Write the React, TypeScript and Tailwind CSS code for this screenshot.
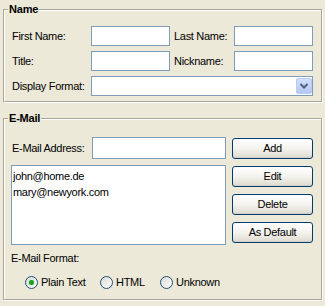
import React from "react";

function Group({ title, className, children }: { title: string; className?: string; children: React.ReactNode }) {
  return (
    <div
      className={`relative border border-[#ACA899] shadow-[inset_1px_1px_0_#ffffff,1px_1px_0_#ffffff] ${className ?? ""}`}
    >
      <span className="absolute left-[4px] top-[-7px] bg-[#ECE9D8] px-[1px] text-[11px] font-bold leading-[13px] tracking-[-0.2px] text-black">
        {title}
      </span>
      {children}
    </div>
  );
}

function TextBox({ className }: { className?: string }) {
  return <div className={`border border-[#7F9DB9] bg-white ${className ?? ""}`} />;
}

function Btn({ children }: { children: React.ReactNode }) {
  return (
    <div className="flex h-[21px] w-[81px] items-center justify-center rounded-[3px] border border-[#003C74] bg-linear-to-b from-white via-[#F4F3EE] to-[#DEDACE] text-[11px] leading-[13px] text-black shadow-[inset_0_-1px_0_#D6D0C5]">
      {children}
    </div>
  );
}

function Radio({ checked, label, className }: { checked?: boolean; label: string; className?: string }) {
  return (
    <div className={`flex items-center ${className ?? ""}`}>
      <div className="flex h-[13px] w-[13px] items-center justify-center rounded-full border border-[#1C5180] bg-linear-to-br from-[#DCD9CF] to-white">
        {checked && <div className="h-[5px] w-[5px] rounded-full bg-[#21A121] shadow-[0_0_1px_#5FCF5F]" />}
      </div>
      <span className="ml-[3px] text-[11px] leading-[13px]">{label}</span>
    </div>
  );
}

export default function App() {
  return (
    <div className="h-[306px] w-[325px] bg-[#ECE9D8] pl-[3px] pt-[9px] font-['Liberation_Sans',Arial,sans-serif] text-[11px] tracking-[-0.3px] text-black">
      <Group title="Name" className="h-[93px] w-[319px]">
        <div className="flex flex-col gap-[5px] pl-[7px] pt-[16px]">
          <div className="flex h-[20px] items-center">
            <span className="w-[80px] pl-[1px]">First Name:</span>
            <TextBox className="h-[20px] w-[79px]" />
            <span className="w-[64px] pl-[4px]">Last Name:</span>
            <TextBox className="h-[20px] w-[79px]" />
          </div>
          <div className="flex h-[20px] items-center">
            <span className="w-[80px] pl-[1px]">Title:</span>
            <TextBox className="h-[20px] w-[79px]" />
            <span className="w-[64px] pl-[4px]">Nickname:</span>
            <TextBox className="h-[20px] w-[79px]" />
          </div>
          <div className="flex h-[20px] items-center">
            <span className="w-[80px] pl-[1px]">Display Format:</span>
            <div className="flex h-[20px] w-[222px] items-center justify-end border border-[#7F9DB9] bg-white">
              <div className="flex h-[16px] w-[16px] items-center justify-center rounded-[2px] border border-[#B9CBF3] bg-linear-to-b from-[#D2DEFB] to-[#B4C8F6]">
                <svg width="10" height="8" viewBox="0 0 10 8">
                  <path d="M1.5 2 L5 5.5 L8.5 2" fill="none" stroke="#4D6185" strokeWidth="2" />
                </svg>
              </div>
            </div>
          </div>
        </div>
      </Group>

      <Group title="E-Mail" className="mt-[16px] h-[182px] w-[319px]">
        <div className="flex pl-[7px] pt-[18px]">
          <div className="flex w-[215px] flex-col">
            <div className="flex h-[22px] items-center">
              <span className="w-[81px] pl-[1px]">E-Mail Address:</span>
              <TextBox className="h-[22px] w-[134px]" />
            </div>
            <div className="mt-[6px] h-[80px] w-[215px] border border-[#7F9DB9] bg-white pl-[1px] pt-[2px]">
              <div className="h-[16px] leading-[16px]">john@home.de</div>
              <div className="h-[16px] leading-[16px]">mary@newyork.com</div>
            </div>
          </div>
          <div className="ml-[6px] flex flex-col gap-[7px] pt-[1px]">
            <Btn>Add</Btn>
            <Btn>Edit</Btn>
            <Btn>Delete</Btn>
            <Btn>As Default</Btn>
          </div>
        </div>
        <div className="mt-[7px] pl-[7px] leading-[13px]">E-Mail Format:</div>
        <div className="mt-[11px] flex pl-[21px]">
          <Radio checked label="Plain Text" className="w-[75px]" />
          <Radio label="HTML" className="w-[60px]" />
          <Radio label="Unknown" />
        </div>
      </Group>
    </div>
  );
}
